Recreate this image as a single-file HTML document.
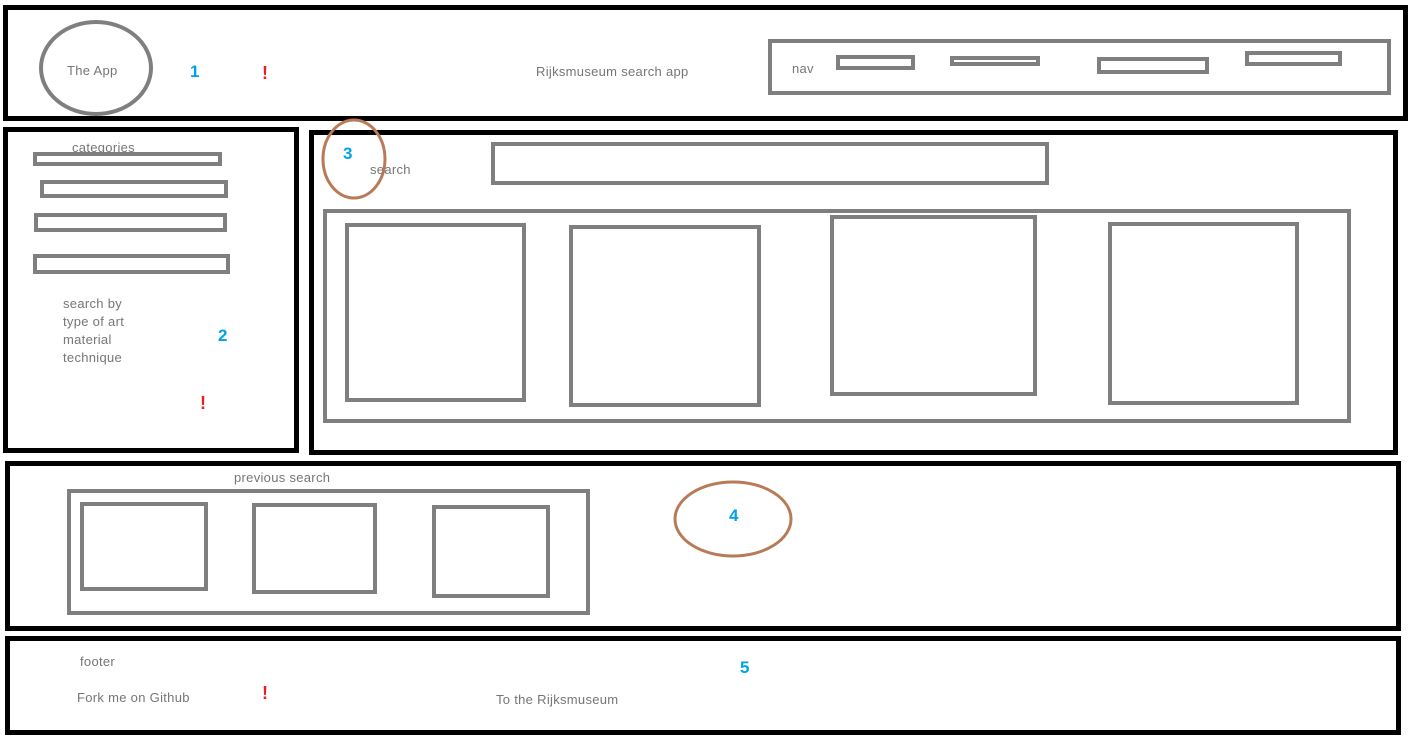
<!DOCTYPE html>
<html><head><meta charset="utf-8"><style>
html,body{margin:0;padding:0;background:#fff;width:1413px;height:744px;overflow:hidden}
svg{display:block}
text{font-family:"Liberation Sans",sans-serif;font-size:13px;fill:#767676;letter-spacing:0.3px}
.n{fill:#00a2e8;font-weight:bold;font-size:17px;letter-spacing:0}
.r{fill:#ed1c24;font-weight:bold;font-size:18px;letter-spacing:0}
.k{fill:none;stroke:#000;stroke-width:5}
.g{fill:none;stroke:#7f7f7f;stroke-width:4}
.b{fill:none;stroke:#b97a57;stroke-width:3}
</style></head><body>
<svg width="1413" height="744" viewBox="0 0 1413 744">
<rect class="k" x="5.5" y="7.5" width="1400" height="111"/>
<ellipse class="g" cx="96" cy="68" rx="55" ry="46"/>
<text x="67" y="75">The App</text>
<text class="n" x="190" y="77">1</text>
<text class="r" x="262" y="79">!</text>
<text x="536" y="76">Rijksmuseum search app</text>
<rect class="g" x="770" y="41" width="619" height="52"/>
<text x="792" y="73">nav</text>
<rect class="g" x="838" y="57" width="75" height="11"/>
<rect class="g" x="952" y="58" width="86" height="6"/>
<rect class="g" x="1099" y="59" width="108" height="13"/>
<rect class="g" x="1247" y="53" width="93" height="11"/>

<rect class="k" x="5.5" y="129.5" width="291" height="321"/>
<text x="72" y="152">categories</text>
<rect class="g" x="35" y="154" width="185" height="10"/>
<rect class="g" x="42" y="182" width="184" height="14"/>
<rect class="g" x="36" y="215" width="189" height="15"/>
<rect class="g" x="35" y="256" width="193" height="16"/>
<text x="63" y="308">search by</text>
<text x="63" y="326">type of art</text>
<text x="63" y="344">material</text>
<text x="63" y="362">technique</text>
<text class="n" x="218" y="341">2</text>
<text class="r" x="200" y="409">!</text>

<rect class="k" x="311.5" y="132.5" width="1084" height="320"/>
<ellipse class="b" cx="354" cy="159" rx="31" ry="39"/>
<text class="n" x="343" y="159">3</text>
<text x="370" y="174">search</text>
<rect class="g" x="493" y="144" width="554" height="39"/>
<rect class="g" x="325" y="211" width="1024" height="210"/>
<rect class="g" x="347" y="225" width="177" height="175"/>
<rect class="g" x="571" y="227" width="188" height="178"/>
<rect class="g" x="832" y="217" width="203" height="177"/>
<rect class="g" x="1110" y="224" width="187" height="179"/>

<rect class="k" x="7.5" y="463.5" width="1391" height="165"/>
<text x="234" y="482">previous search</text>
<rect class="g" x="69" y="491" width="519" height="122"/>
<rect class="g" x="82" y="504" width="124" height="85"/>
<rect class="g" x="254" y="505" width="121" height="87"/>
<rect class="g" x="434" y="507" width="114" height="89"/>
<ellipse class="b" cx="733" cy="519" rx="58" ry="37"/>
<text class="n" x="729" y="521">4</text>

<rect class="k" x="7.5" y="638.5" width="1391" height="94"/>
<text x="80" y="666">footer</text>
<text x="77" y="702">Fork me on Github</text>
<text class="r" x="262" y="699">!</text>
<text x="496" y="704">To the Rijksmuseum</text>
<text class="n" x="740" y="673">5</text>
</svg>
</body></html>
